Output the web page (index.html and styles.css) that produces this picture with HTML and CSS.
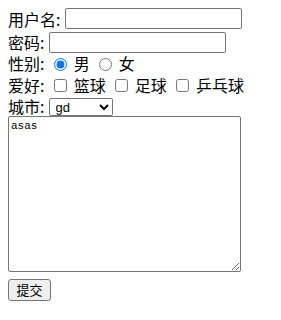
FILE: index.html
```html
<!DOCTYPE html>
<html lang="zh">
<head>
<meta charset="UTF-8">
<title>注册</title>
<link rel="stylesheet" href="styles.css">
</head>
<body>
<form class="reg-form">
  <div class="row row-user">用户名: <input type="text" class="txt"></div>
  <div class="row row-pwd">密码: <input type="password" class="txt"></div>
  <div class="row row-sex">性别: <input type="radio" name="sex" class="opt" checked> 男 <input type="radio" name="sex" class="opt"> 女</div>
  <div class="row row-hobby">爱好: <input type="checkbox" class="opt"> 篮球 <input type="checkbox" class="opt"> 足球 <input type="checkbox" class="opt"> 乒乓球</div>
  <div class="row row-city">城市: <select class="city">
      <option>gd</option>
      <option>bj</option>
    </select></div>
  <textarea class="memo">asas</textarea>
  <div class="row-btn"><button type="submit" class="btn">提交</button></div>
</form>
</body>
</html>
```

FILE: styles.css
```css
body {
  margin: 8px;
  font-family: "Noto Sans CJK SC", "Microsoft YaHei", sans-serif;
  font-size: 16px;
  color: #000;
  background: #fff;
}

.row {
  white-space: nowrap;
  word-spacing: 0.5px;
}

.row-user { height: 23px; line-height: 22px; }
.row-pwd { height: 22px; line-height: 22px; }
.row-sex { height: 21px; line-height: 21px; }
.row-hobby { height: 22px; line-height: 22px; }
.row-city { height: 20px; line-height: 20px; }

.txt {
  box-sizing: border-box;
  width: 177px;
  height: 21px;
  margin: 0;
  padding: 1px 2px;
  border: 1px solid #767676;
  border-radius: 2px;
  vertical-align: top;
  font-size: 13px;
}

.row-pwd .txt {
  margin-top: 1px;
}

.opt {
  width: 13px;
  height: 13px;
  margin: 5px 3px 0 5px;
  vertical-align: top;
  accent-color: #0075ff;
}

.city {
  box-sizing: border-box;
  width: 64px;
  height: 18px;
  margin-top: 2px;
  padding: 0 2px;
  border: 1px solid #767676;
  border-radius: 2px;
  font-family: "Liberation Sans", Arial, sans-serif;
  font-size: 13px;
  vertical-align: top;
  background: #fff;
}

.memo {
  display: block;
  box-sizing: border-box;
  width: 233px;
  height: 156px;
  margin: 0;
  padding: 3px 2px;
  border: 1px solid #767676;
  border-radius: 2px;
  font-family: "Liberation Mono", "DejaVu Sans Mono", monospace;
  font-size: 11px;
  resize: both;
}

.row-btn {
  margin-top: 4px;
}

.btn {
  box-sizing: border-box;
  width: 43px;
  height: 22px;
  padding: 0;
  border: 1px solid #767676;
  border-radius: 3px;
  background: #efefef;
  font-family: "Noto Sans CJK SC", sans-serif;
  font-size: 13px;
  line-height: 20px;
}
```
